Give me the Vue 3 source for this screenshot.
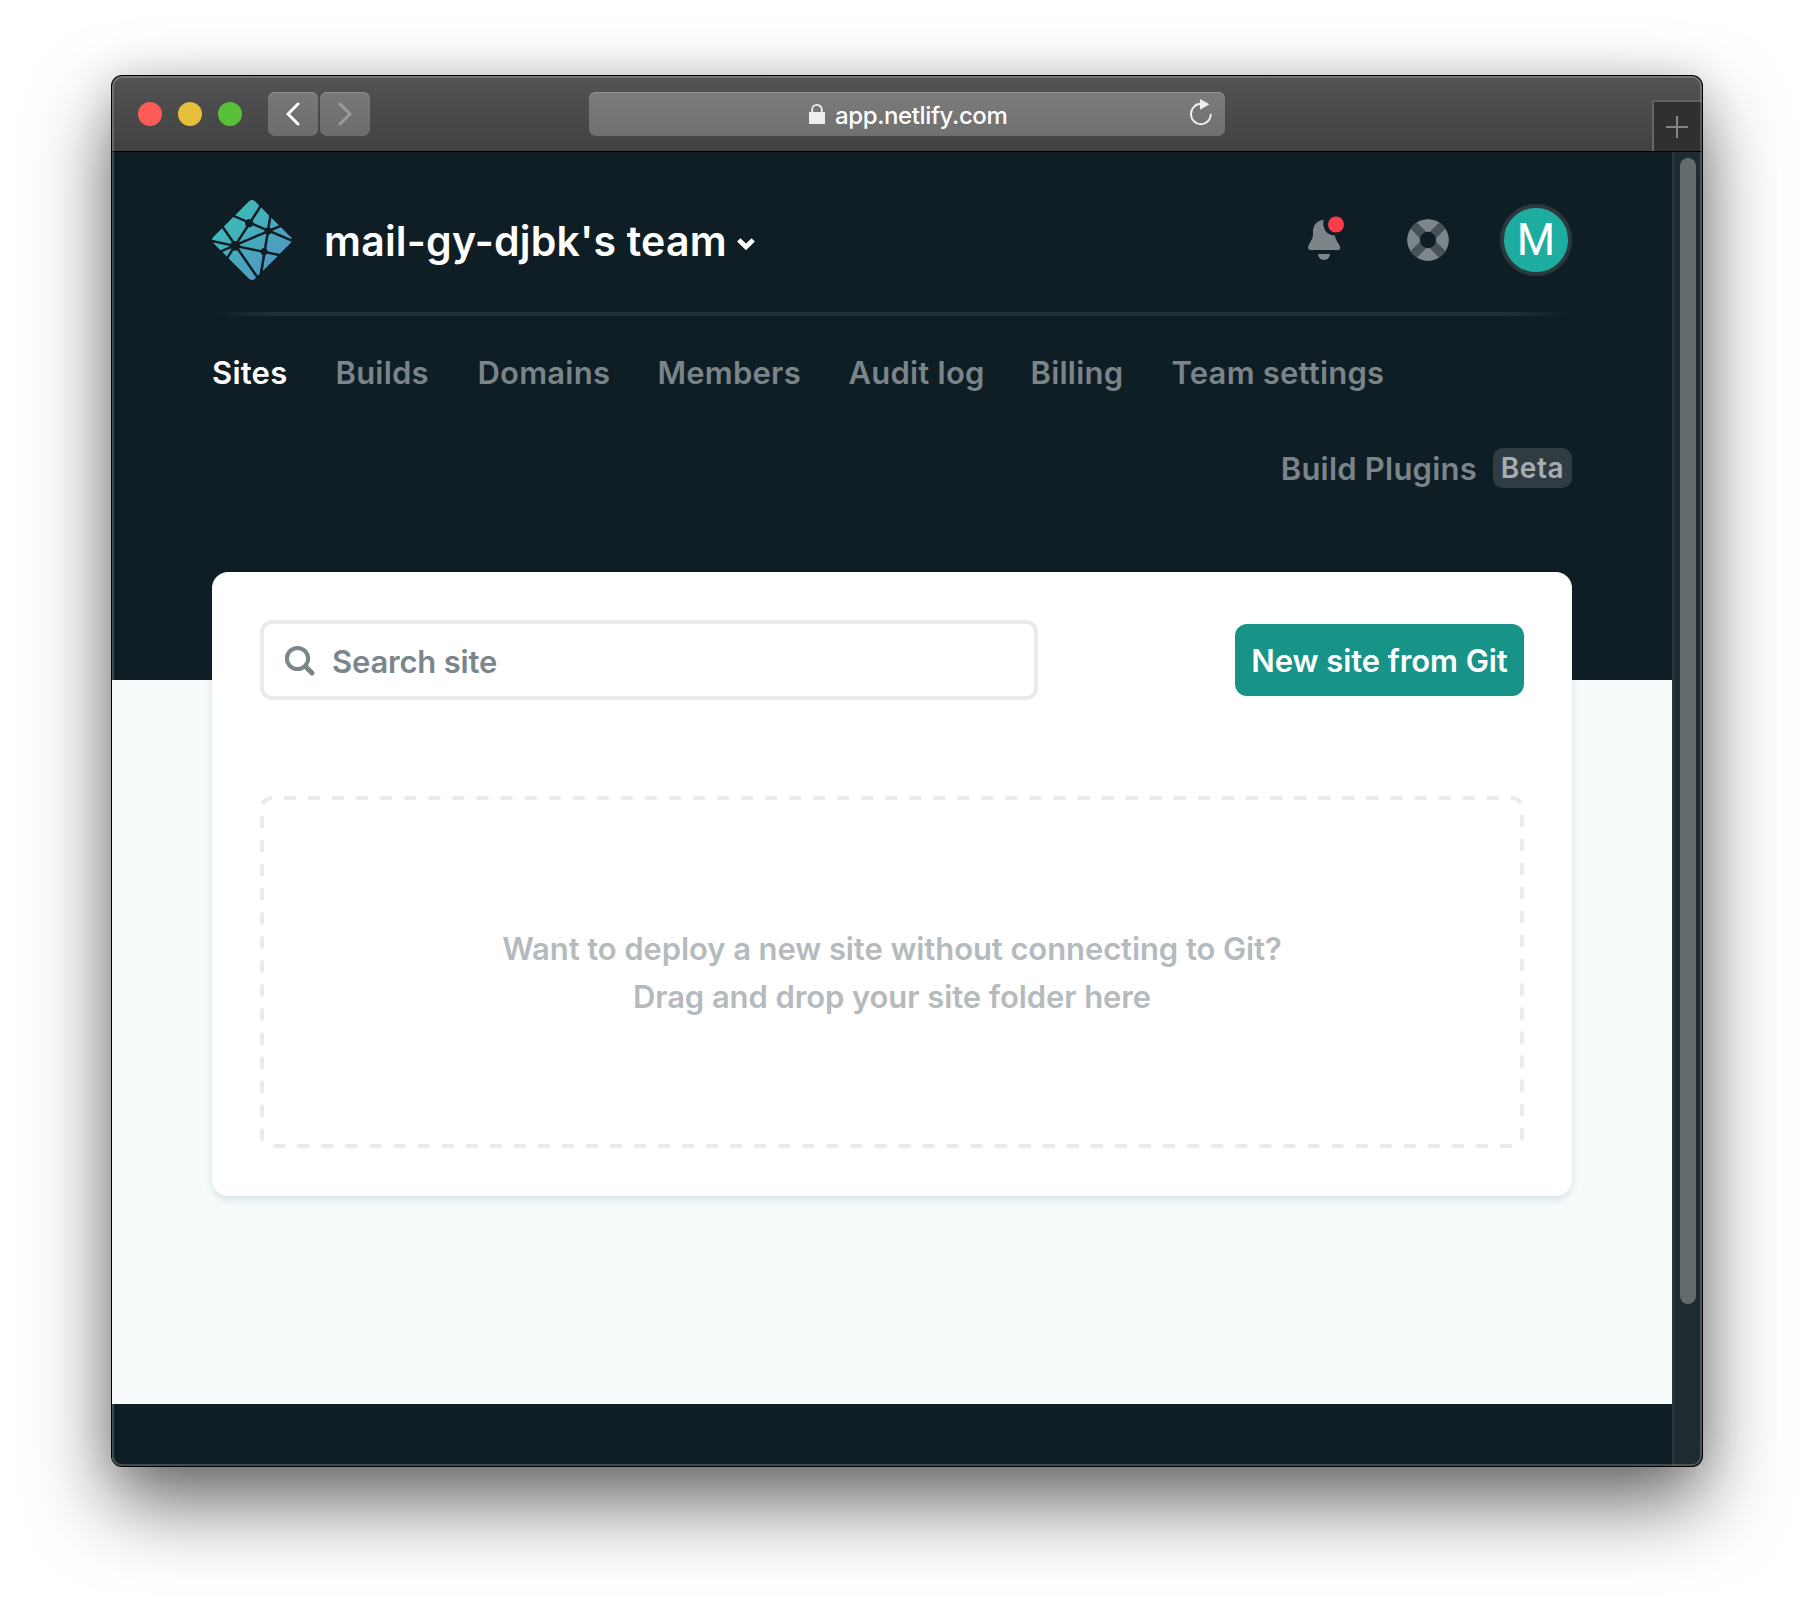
<script setup>
const tabs = [
  { label: 'Sites', width: 75.5 },
  { label: 'Builds', width: 94 },
  { label: 'Domains', width: 132 },
  { label: 'Members', width: 143 },
  { label: 'Audit log', width: 134 },
  { label: 'Billing', width: 93 },
  { label: 'Team settings', width: 214 },
]
</script>

<template>
  <div class="desktop">
    <div class="window">
      <header class="toolbar">
        <div class="lights"><i class="red"></i><i class="yellow"></i><i class="green"></i></div>
        <div class="history">
          <button class="key"><svg width="14" height="24" viewBox="0 0 14 24"><path d="M12 2 2 12l10 10" /></svg></button>
          <button class="key off"><svg width="14" height="24" viewBox="0 0 14 24"><path d="M2 2l10 10L2 22" /></svg></button>
        </div>
        <div class="address">
          <svg class="lock" width="16" height="20" viewBox="0 0 16 20"><path d="M0 8h16v12H0z" fill="#eee" /><path d="M3.200 8.500V5.500a4.800 4.600 0 0 1 9.600 0v3" fill="none" stroke="#eee" stroke-width="1.800" /></svg>
          <span class="url">app.netlify.com</span>
          <svg class="reload" width="24" height="28" viewBox="0 0 24 28"><path d="M21.800 15a9.900 10.200 0 1 1-9.900-10.200" fill="none" stroke="#eee" stroke-width="1.900" /><path d="M11 0l9.500 5.300L11 10.700z" fill="#eee" /></svg>
        </div>
        <div class="newtab"><svg width="22" height="22" viewBox="0 0 22 22"><path d="M11 0v22M0 11h22" stroke="#858585" stroke-width="2" /></svg></div>
      </header>
      <div class="viewport">
        <div class="page">
          <div class="top">
            <div class="brand">
              <svg class="logo" width="80" height="80" viewBox="0.8 0.8 38.400 38.400">
                <defs><linearGradient id="lg" x1=".2" y1=".15" x2=".8" y2=".75"><stop offset="0" stop-color="#3ebab8" /><stop offset="1" stop-color="#4f9bc1" /></linearGradient></defs>
                <path fill="url(#lg)" d="M28.589 14.135l-.014-.006c-.008-.003-.016-.006-.023-.013a.11.11 0 0 1-.028-.093l.773-4.726 3.625 3.626-3.770 1.604a.083.083 0 0 1-.033.006h-.015c-.005-.003-.01-.007-.02-.017a1.716 1.716 0 0 0-.495-.381zm5.258-.288l3.876 3.876c.805.806 1.208 1.208 1.355 1.674.022.069.04.138.054.209l-9.263-3.923a.728.728 0 0 0-.015-.006c-.037-.015-.08-.032-.08-.07 0-.038.044-.056.081-.071l.012-.005 3.980-1.684zm5.127 7.003c-.2.376-.59.766-1.250 1.427l-4.370 4.369-5.652-1.177-.03-.006c-.05-.008-.103-.017-.103-.062a1.706 1.706 0 0 0-.655-1.193c-.023-.023-.017-.059-.01-.092 0-.005 0-.01.002-.014l1.063-6.526.004-.022c.006-.05.015-.108.06-.108a1.730 1.730 0 0 0 1.160-.665c.009-.01.015-.021.027-.027.032-.015.07 0 .103.014l9.650 4.082zm-6.625 6.801l-7.186 7.186 1.230-7.560.002-.01c.001-.01.003-.02.006-.029.01-.024.036-.034.061-.044l.012-.005a1.850 1.850 0 0 0 .695-.517c.024-.028.053-.055.09-.06a.09.09 0 0 1 .029 0l5.060 1.040zm-8.707 8.707l-.81.81-8.955-12.942a.424.424 0 0 0-.01-.014c-.014-.019-.029-.038-.026-.06 0-.016.011-.03.022-.042l.01-.013c.027-.04.05-.08.075-.123l.02-.035.003-.003c.014-.024.027-.047.051-.06.021-.01.05-.006.073-.001l9.921 2.046a.164.164 0 0 1 .076.033c.013.013.016.027.019.043a1.757 1.757 0 0 0 1.028 1.175c.028.014.016.045.003.078a.238.238 0 0 0-.015.045c-.125.76-1.197 7.298-1.485 9.063zm-1.692 1.691c-.597.591-.949.904-1.347 1.030a2 2 0 0 1-1.206 0c-.466-.148-.869-.55-1.674-1.356L8.730 28.730l2.349-3.643c.011-.018.022-.034.04-.047.025-.018.061-.01.091 0a2.434 2.434 0 0 0 1.638-.083c.027-.01.054-.017.075.002a.19.19 0 0 1 .028.032L21.950 38.050zM7.863 27.863L5.800 25.800l4.074-1.738a.084.084 0 0 1 .033-.007c.034 0 .054.034.072.065a2.910 2.910 0 0 0 .13.184l.013.016c.012.017.004.034-.008.05l-2.250 3.493zm-2.976-2.976l-2.610-2.610c-.444-.444-.766-.766-.99-1.043l7.936 1.646a.84.84 0 0 0 .03.005c.049.008.103.017.103.063 0 .05-.059.073-.109.092l-.023.01-4.337 1.837zM.831 19.892a2 2 0 0 1 .09-.495c.148-.466.55-.868 1.356-1.674l3.340-3.340a2175.525 2175.525 0 0 0 4.626 6.687c.027.036.057.076.026.106-.146.161-.292.337-.395.528a.16.16 0 0 1-.05.062c-.013.008-.027.005-.042.002H9.780L.831 19.892zm5.680-6.403l4.491-4.491c.422.185 1.958.834 3.332 1.414 1.040.44 1.988.84 2.286.97.03.012.057.024.07.054.008.018.004.041 0 .06a2.003 2.003 0 0 0 .523 1.828c.03.03 0 .073-.026.11l-.014.021-4.560 7.063c-.012.02-.023.037-.043.05-.024.015-.058.008-.086.001a2.274 2.274 0 0 0-.543-.074c-.164 0-.342.03-.522.063h-.001c-.02.003-.038.007-.054-.005a.21.21 0 0 1-.045-.051l-4.808-7.013zm5.398-5.398l5.814-5.814c.805-.805 1.208-1.208 1.674-1.355a2 2 0 0 1 1.206 0c.466.147.869.55 1.674 1.355l1.260 1.260-4.135 6.404a.155.155 0 0 1-.041.048c-.025.017-.06.01-.09 0a2.097 2.097 0 0 0-1.920.37c-.027.028-.067.012-.101-.003-.54-.235-4.740-2.010-5.341-2.265zm12.506-3.676l3.818 3.818-.92 5.698v.015a.135.135 0 0 1-.008.038c-.01.02-.03.024-.05.03a1.830 1.830 0 0 0-.548.273.154.154 0 0 0-.02.017c-.011.012-.022.023-.04.025a.114.114 0 0 1-.043-.007l-5.818-2.472-.011-.005c-.037-.015-.081-.033-.081-.071a2.198 2.198 0 0 0-.31-.915c-.028-.046-.059-.094-.035-.141l4.066-6.303zm-3.932 8.606l5.454 2.310c.03.014.063.027.076.058a.106.106 0 0 1 0 .057c-.016.08-.03.171-.03.263v.153c0 .038-.039.054-.075.069l-.011.004c-.864.369-12.130 5.173-12.147 5.173-.017 0-.035 0-.052-.017-.03-.03 0-.072.027-.11a.76.76 0 0 0 .014-.02l4.482-6.940.008-.012c.026-.042.056-.089.104-.089l.045.007c.102.014.192.027.283.027.68 0 1.310-.331 1.690-.897a.16.16 0 0 1 .034-.04c.027-.02.067-.01.098.004zm-6.246 9.185l12.280-5.237s.018 0 .035.017c.067.067.124.112.179.154l.027.017c.025.014.05.03.052.056 0 .01 0 .016-.002.025L25.756 23.700l-.004.026c-.007.05-.014.107-.061.107a1.729 1.729 0 0 0-1.373.847l-.005.008c-.014.023-.027.045-.05.057-.021.01-.048.006-.07.001l-9.793-2.020c-.01-.002-.152-.519-.163-.52z" />
              </svg>
              <h1>mail-gy-djbk's team</h1>
              <svg class="chev" width="20" height="14" viewBox="0 0 20 14"><path d="M2.800 2.900l7.200 7.100 7.200-7.100" fill="none" stroke="#fff" stroke-width="4.800" /></svg>
              <div class="actions">
                <svg class="bell" width="40" height="48" viewBox="0 0 40 48">
                  <path fill="#7d8589" d="M17.500 4C16 13 21 19.500 29 19.500c0 4 4 8 5 11C34.800 33 33.500 34 32 34H5c-2.500 0-3.300-1.500-2.800-3.500C3 27 7 23 7 19v-3C7 9 11 4 17.500 4z" />
                  <path fill="#7d8589" d="M12 38h12a6 6 0 0 1-12 0z" /><circle cx="30" cy="8.500" r="8" fill="#fb3d4b" />
                </svg>
                <svg class="help" width="42" height="42" viewBox="0 0 42 42">
                  <clipPath id="ring"><circle cx="21" cy="21" r="21" /></clipPath>
                  <g clip-path="url(#ring)">
                    <circle cx="21" cy="21" r="21" fill="#7d868b" />
                    <path d="M4 4l34 34M38 4 4 38" stroke="#465158" stroke-width="9" />
                    <circle cx="21" cy="21" r="8.200" fill="#0f1e25" />
                  </g>
                </svg>
                <div class="avatar">M</div>
              </div>
            </div>
            <div class="rule"></div>
            <nav>
              <a v-for="(tab, i) in tabs" :key="tab.label" :class="{ on: i === 0 }" :style="{ width: tab.width + 'px' }">{{ tab.label }}</a>
            </nav>
            <div class="plugins"><a>Build Plugins</a><span class="beta">Beta</span></div>
          </div>
          <main>
            <section class="card">
              <div class="controls">
                <label class="search">
                  <svg width="32" height="32" viewBox="0 0 32 32"><g fill="none" stroke="#7b868a"><circle cx="13.500" cy="13.500" r="10.600" stroke-width="4" /><path d="M21.500 21.500l6.500 6.500" stroke-width="5" stroke-linecap="round" /></g></svg>
                  <span>Search site</span>
                </label>
                <button class="new">New site from Git</button>
              </div>
              <div class="drop">
                <svg class="dash" width="1264" height="352"><rect x="2" y="2" width="1260" height="348" rx="10" fill="none" stroke="#e9ebeb" stroke-width="4" stroke-dasharray="12 12.050" stroke-dashoffset="12" /></svg>
                <p>Want to deploy a new site without connecting to Git?</p>
                <p>Drag and drop your site folder here</p>
              </div>
            </section>
          </main>
          <footer></footer>
        </div>
        <aside class="scroll"><div class="thumb"></div></aside>
      </div>
    </div>
  </div>
</template>

<style>
html, body { margin: 0; overflow: hidden; background: #fff; }
</style>
<style scoped>
* { box-sizing: border-box; }
.desktop { width: 1814px; height: 1614px; padding: 76px 112px; background: #fff; font-family: Inter, "Liberation Sans", sans-serif; overflow: hidden; }
.window { position: relative; width: 1590px; height: 1390px; border-radius: 10px; background: #0f1e25; box-shadow: 0 0 0 1px #000, 0 36px 80px rgba(0,0,0,.6), 0 0 40px rgba(0,0,0,.12); overflow: hidden; display: flex; flex-direction: column; }
.window::after { content: ""; position: absolute; inset: 0; border-radius: 10px; border: 2px solid rgba(255,255,255,.2); pointer-events: none; }
.toolbar { height: 76px; flex: none; background: linear-gradient(#535353, #414141); border-bottom: 1px solid #000; display: flex; align-items: flex-start; padding: 16px 0 0 26px; }
.lights { display: flex; gap: 16px; padding-top: 10px; }
.lights i { width: 24px; height: 24px; border-radius: 50%; }
.red { background: #ff5b57; }
.yellow { background: #e5bf3c; }
.green { background: #57c038; }
.history { display: flex; gap: 2px; margin-left: 26px; }
.key { width: 50px; height: 44px; border: 0; padding: 0; border-radius: 7px; background: linear-gradient(#787878, #6c6c6c); box-shadow: inset 0 1px #919191; display: flex; align-items: center; justify-content: center; }
.key path { fill: none; stroke: #fff; stroke-width: 3; stroke-linecap: round; }
.off path { stroke: #9b9b9b; }
.address { width: 636px; height: 44px; margin-left: 219px; border-radius: 7px; background: linear-gradient(#7b7b7b, #707070); box-shadow: inset 0 1px #989898; display: flex; align-items: center; padding: 0 12px 0 220px; }
.url { font-size: 24px; font-weight: 500; letter-spacing: -.39px; color: #fff; margin-left: 10px; line-height: 44px; white-space: nowrap; padding-top: 3px; }
.reload { margin-left: auto; margin-top: -3px; }
.newtab { margin-left: auto; margin-top: 8px; width: 50px; height: 51px; background: #303030; border-left: 2px solid #666; border-top: 2px solid #616161; display: flex; align-items: center; justify-content: center; padding-right: 2px; }
.viewport { flex: 1; display: flex; min-height: 0; }
.page { width: 1560px; display: flex; flex-direction: column; background: #f7fbfc; }
.top { height: 528px; background: #0f1e25; padding: 48px 100px 0; flex: none; }
.brand { height: 80px; display: flex; align-items: center; }
h1 { margin: 2px 0 0 32px; color: #fff; font-size: 41px; font-weight: 600; letter-spacing: .22px; line-height: 80px; white-space: nowrap; }
.chev { margin-left: 9px; margin-top: 8px; }
.actions { margin-left: auto; display: flex; align-items: center; }
.bell { margin-right: 61px; }
.help { margin-right: 51px; }
.avatar { width: 72px; height: 72px; border-radius: 50%; border: 4px solid #2c383e; background: #1dada0; color: #fff; font: 400 44px/65px Roboto, sans-serif; text-align: center; }
.rule { height: 4px; margin-top: 32px; background: linear-gradient(90deg, transparent, #233037 5%, #233037 95%, transparent); }
nav { display: flex; gap: 48px; margin-top: 33px; height: 48px; }
a { font-size: 31px; font-weight: 600; letter-spacing: .22px; line-height: 48px; color: #7b8489; white-space: nowrap; }
.on { color: #fff; }
.plugins { display: flex; justify-content: flex-end; align-items: center; height: 48px; margin-top: 47px; }
.plugins a { padding-top: 2px; }
.beta { width: 79px; margin-left: 16px; height: 40px; text-align: center; border-radius: 10px; background: #303c42; color: #a8adb1; font-size: 28px; font-weight: 600; letter-spacing: .6px; line-height: 40px; }
main { height: 724px; flex: none; padding: 0 100px; }
.card { height: 624px; margin-top: -108px; padding: 48px; border-radius: 16px; background: #fff; box-shadow: 0 4px 8px rgba(14,60,60,.12); }
.controls { display: flex; justify-content: space-between; align-items: center; height: 80px; }
.search { width: 778px; height: 80px; border: 4px solid #e9ebeb; border-radius: 12px; display: flex; align-items: center; padding: 2px 0 0 20px; color: #7b868a; font-size: 31px; font-weight: 600; letter-spacing: -.19px; }
.search span { margin-left: 16px; }
.new { width: 289px; height: 72px; border: 0; border-radius: 12px; background: #179387; color: #fff; font: 600 31px/70px Inter, sans-serif; letter-spacing: -.08px; padding: 2px 0 0; white-space: nowrap; }
.drop { position: relative; height: 352px; margin-top: 96px; padding-top: 129px; text-align: center; color: #b5babd; font-size: 31px; font-weight: 600; letter-spacing: -.09px; }
.dash { position: absolute; left: 0; top: 0; }
p { margin: 0; line-height: 48px; white-space: nowrap; }
footer { flex: 1; background: #0f1e25; }
.scroll { flex: 1; background: #1e2b31; border-left: 2px solid #2a363c; padding: 6px 0 0 6px; }
.thumb { width: 16px; height: 1146px; border-radius: 8px; background: #626b6e; }
</style>
